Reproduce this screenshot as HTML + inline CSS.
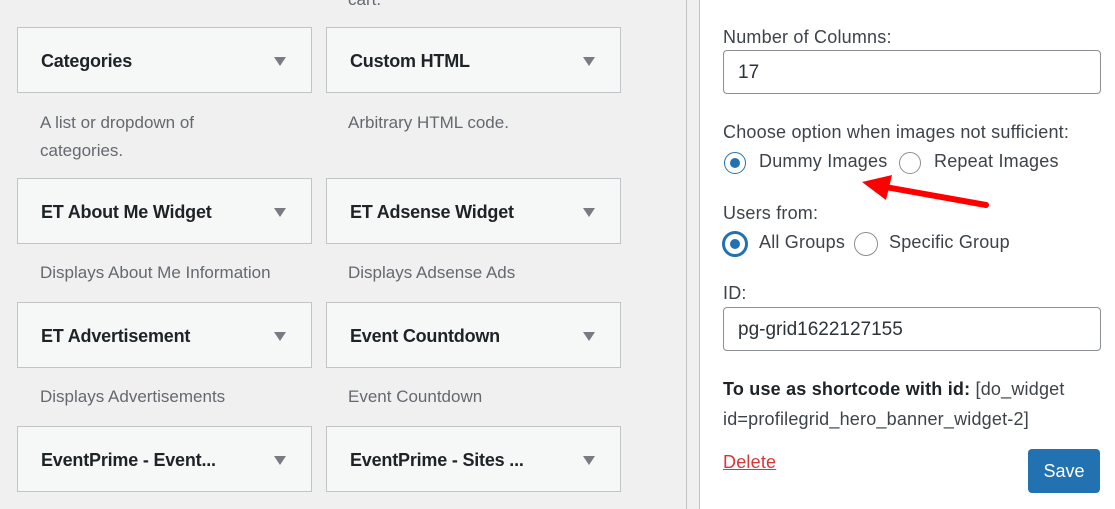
<!DOCTYPE html>
<html><head><style>
body{margin:0;width:1115px;height:509px;overflow:hidden;background:#f0f0f1;font-family:"Liberation Sans",sans-serif;position:relative;color:#1d2327}
.box{position:absolute;width:293px;height:64px;background:#f6f7f7;border:1px solid #c3c4c7;box-sizing:content-box}
.box span{position:absolute;left:23px;top:23px;font-size:18px;font-weight:bold;letter-spacing:-0.2px}
.box i{position:absolute;right:25px;top:29px;width:0;height:0;border-left:6px solid transparent;border-right:6px solid transparent;border-top:9px solid #787c82}
.d{position:absolute;font-size:17px;color:#646970;line-height:28px}
.p{position:absolute;left:699px;top:0;width:416px;height:509px;background:#fff;border-left:1px solid #c3c4c7}
.g{position:absolute;left:686px;top:0;width:13px;height:509px;background:#f0f0f1;border-left:1px solid #c3c4c7}
.t{position:absolute;font-size:18px;color:#3c434a;letter-spacing:0.2px}
.in{position:absolute;left:723px;width:376px;height:42px;border:1px solid #8c8f94;border-radius:4px;background:#fff}
.in span{position:absolute;left:14px;top:11px;font-size:19px;color:#2c3338}
.r{position:absolute;width:22px;height:22px;border:1px solid #8c8f94;border-radius:50%;background:#fff;box-sizing:border-box}
.r.on{border-color:#2271b1}
.r.on:after{content:"";position:absolute;left:5px;top:5px;width:10px;height:10px;border-radius:50%;background:#2271b1}
</style></head><body>
<div class="d" style="left:348px;top:-14px">cart.</div>
<div class="box" style="left:17px;top:27px"><span>Categories</span><i></i></div>
<div class="box" style="left:326px;top:27px"><span>Custom HTML</span><i></i></div>
<div class="d" style="left:40px;top:109px">A list or dropdown of<br>categories.</div>
<div class="d" style="left:348px;top:109px">Arbitrary HTML code.</div>
<div class="box" style="left:17px;top:178px"><span>ET About Me Widget</span><i></i></div>
<div class="box" style="left:326px;top:178px"><span>ET Adsense Widget</span><i></i></div>
<div class="d" style="left:40px;top:259px">Displays About Me Information</div>
<div class="d" style="left:348px;top:259px">Displays Adsense Ads</div>
<div class="box" style="left:17px;top:302px"><span>ET Advertisement</span><i></i></div>
<div class="box" style="left:326px;top:302px"><span>Event Countdown</span><i></i></div>
<div class="d" style="left:40px;top:383px">Displays Advertisements</div>
<div class="d" style="left:348px;top:383px">Event Countdown</div>
<div class="box" style="left:17px;top:426px"><span>EventPrime - Event...</span><i></i></div>
<div class="box" style="left:326px;top:426px"><span>EventPrime - Sites ...</span><i></i></div>
<div class="g"></div>
<div class="p"></div>
<div class="t" style="left:723px;top:27px">Number of Columns:</div>
<div class="in" style="top:50px"><span>17</span></div>
<div class="t" style="left:723px;top:122px">Choose option when images not sufficient:</div>
<div class="r on" style="left:724px;top:152px"></div>
<div class="t" style="left:759px;top:151px">Dummy Images</div>
<div class="r" style="left:899px;top:152px"></div>
<div class="t" style="left:934px;top:151px">Repeat Images</div>
<svg style="position:absolute;left:850px;top:175px" width="145" height="40"><line x1="136" y1="30" x2="30" y2="11" stroke="#f00" stroke-width="6" stroke-linecap="round"/><polygon points="12,7 42,0 36,25" fill="#f00"/></svg>
<div class="t" style="left:723px;top:203px">Users from:</div>
<div class="r on" style="left:722px;top:231px;width:26px;height:26px;border-width:3px"><span></span></div>
<div class="t" style="left:759px;top:232px">All Groups</div>
<div class="r" style="left:854px;top:232px;width:24px;height:24px"></div>
<div class="t" style="left:889px;top:232px">Specific Group</div>
<div class="t" style="left:723px;top:283px">ID:</div>
<div class="in" style="top:307px"><span>pg-grid1622127155</span></div>
<div class="t" style="left:723px;top:374px;line-height:30px"><b style="color:#1d2327">To use as shortcode with id:</b> [do_widget<br>id=profilegrid_hero_banner_widget-2]</div>
<div class="t" style="left:723px;top:452px;color:#d63638;text-decoration:underline">Delete</div>
<div style="position:absolute;left:1028px;top:449px;width:72px;height:44px;background:#2271b1;border-radius:4px;color:#fff;font-size:18px;text-align:center;line-height:44px">Save</div>
</body></html>
